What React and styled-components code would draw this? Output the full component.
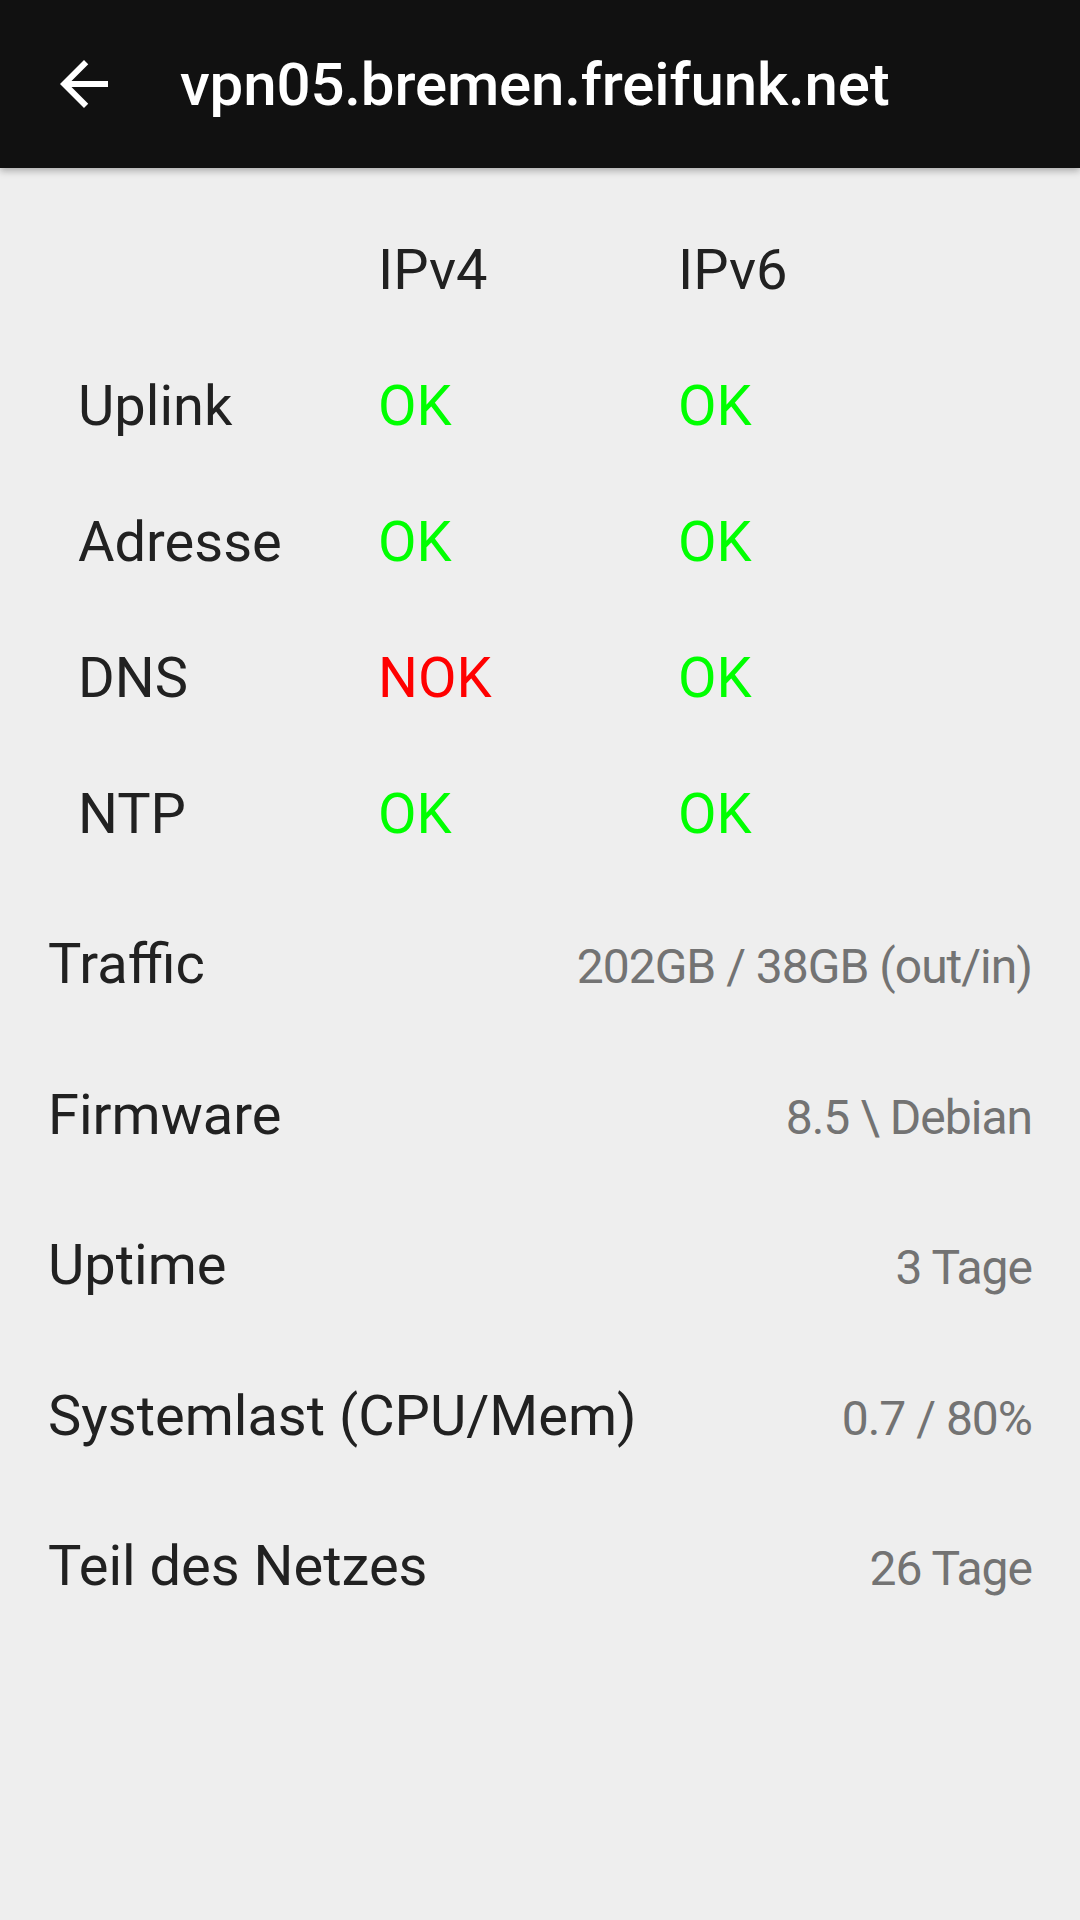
import React from "react";
import styled, { createGlobalStyle } from "styled-components";

const Global = createGlobalStyle`
  html, body { margin: 0; padding: 0; background: #eeeeee; }
  body { font-family: Roboto, "Liberation Sans", sans-serif; }
  * { box-sizing: border-box; }
`;

const Screen = styled.div`
  width: 1080px;
  min-height: 1920px;
  background: #eeeeee;
  display: flex;
  flex-direction: column;
`;

const Toolbar = styled.header`
  position: relative;
  z-index: 1;
  height: 168px;
  background: #111111;
  display: flex;
  align-items: center;
  padding-left: 48px;
  box-shadow: 0 3px 7px rgba(0, 0, 0, 0.28);
`;

const NavButton = styled.div`
  width: 72px;
  height: 72px;
  display: flex;
  align-items: center;
  justify-content: center;
  color: #ffffff;
`;

const Title = styled.h1`
  margin: 0 0 0 60px;
  font-family: Roboto, "Liberation Sans", sans-serif;
  font-weight: 500;
  font-size: 60px;
  color: #ffffff;
  letter-spacing: -0.15px;
`;

const Content = styled.main`
  display: flex;
  flex-direction: column;
  padding-top: 34px;
`;

const StatusGrid = styled.div`
  display: grid;
  grid-template-columns: 300px 300px 1fr;
  grid-auto-rows: 136px;
  padding-left: 78px;
`;

const Cell = styled.div`
  font-size: 56px;
  line-height: 136px;
  color: ${(p) => (p.$state === "ok" ? "#00ff00" : p.$state === "nok" ? "#ff0000" : "#212121")};
  white-space: nowrap;
`;

const InfoList = styled.div`
  display: flex;
  flex-direction: column;
  padding: 7px 48px 0 48px;
`;

const InfoRow = styled.div`
  display: flex;
  align-items: baseline;
  justify-content: space-between;
  height: 150.5px;
`;

const InfoLabel = styled.span`
  font-size: 56px;
  line-height: 150.5px;
  color: #212121;
  white-space: nowrap;
`;

const InfoValue = styled.span`
  font-size: 48px;
  line-height: 150.5px;
  color: #737373;
  white-space: nowrap;
  letter-spacing: -1px;
`;

const BackArrow = () => (
  <svg width="72" height="72" viewBox="0 0 24 24" fill="currentColor">
    <path d="M20 11H7.83l5.59-5.59L12 4l-8 8 8 8 1.41-1.41L7.83 13H20v-2z" />
  </svg>
);

const checks = [
  ["Uplink", "ok", "ok"],
  ["Adresse", "ok", "ok"],
  ["DNS", "nok", "ok"],
  ["NTP", "ok", "ok"],
];

const info = [
  ["Traffic", "202GB / 38GB (out/in)"],
  ["Firmware", "8.5 \\ Debian"],
  ["Uptime", "3 Tage"],
  ["Systemlast (CPU/Mem)", "0.7 / 80%"],
  ["Teil des Netzes", "26 Tage"],
];

const label = (s) => (s === "ok" ? "OK" : "NOK");

export default function App() {
  return (
    <>
      <Global />
      <Screen>
        <Toolbar>
          <NavButton>
            <BackArrow />
          </NavButton>
          <Title>vpn05.bremen.freifunk.net</Title>
        </Toolbar>
        <Content>
          <StatusGrid>
            <Cell />
            <Cell>IPv4</Cell>
            <Cell>IPv6</Cell>
            {checks.map(([name, v4, v6]) => (
              <React.Fragment key={name}>
                <Cell>{name}</Cell>
                <Cell $state={v4}>{label(v4)}</Cell>
                <Cell $state={v6}>{label(v6)}</Cell>
              </React.Fragment>
            ))}
          </StatusGrid>
          <InfoList>
            {info.map(([k, v]) => (
              <InfoRow key={k}>
                <InfoLabel>{k}</InfoLabel>
                <InfoValue>{v}</InfoValue>
              </InfoRow>
            ))}
          </InfoList>
        </Content>
      </Screen>
    </>
  );
}
